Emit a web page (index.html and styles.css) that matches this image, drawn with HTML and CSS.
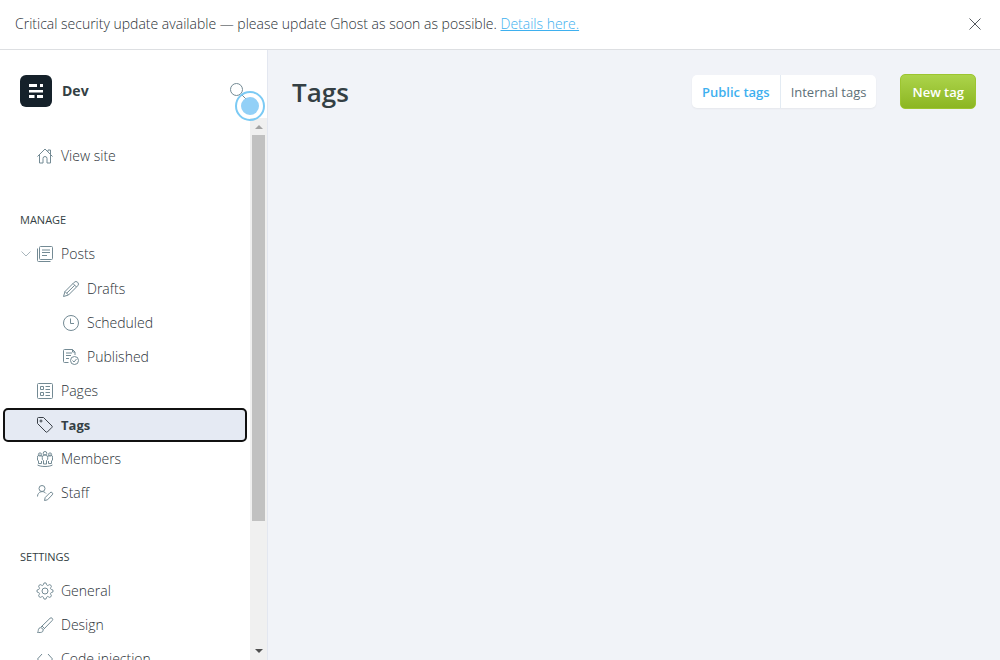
FILE: index.html
```html
<!DOCTYPE html>
<html lang="en">
<head>
<meta charset="utf-8">
<meta name="viewport" content="width=device-width, initial-scale=1">
<title>Tags - Dev</title>
<link rel="stylesheet" href="styles.css">
</head>
<body>
<div class="app">
  <aside class="alert">
    <p class="alert-text">Critical security update available — please update Ghost as soon as possible. <a href="#details">Details here.</a></p>
    <button class="alert-close" type="button" aria-label="Close">
      <svg viewBox="0 0 12 12" width="12" height="12"><path d="M.5.5l11 11M11.5.5l-11 11"/></svg>
    </button>
  </aside>
  <div class="shell">
    <nav class="sidebar" aria-label="Main">
      <header class="site">
        <svg class="site-logo" viewBox="0 0 32 32" width="32" height="32"><rect width="32" height="32" rx="6" fill="#15212a"/><path fill="#fff" d="M9 9h8v3H9zM20 9h3v3h-3zM9 15h14v2.500H9zM9 20h5.500v3H9zM17 20h6v3h-6z"/></svg>
        <span class="site-name">Dev</span>
        <button class="search" type="button" aria-label="Search">
          <svg class="icon" viewBox="0 0 16 16" width="16" height="16"><circle cx="6.500" cy="6.500" r="6"/><path d="M11 11l5 5"/></svg>
          <span class="pulse"></span>
        </button>
      </header>
      <div class="scroller">
        <div class="menu">
          <ul class="list">
            <li><a class="item" href="#site"><svg class="icon" viewBox="0 0 16 16" width="16" height="16"><path d="M.5 8.500L8 1l7.500 7.500M2.500 7v8h3.500v-4.500a2 2 0 0 1 4 0V15h3.500V7M11 3.500V2h2.500v4"/></svg>View site</a></li>
          </ul>
          <h2 class="heading">Manage</h2>
          <ul class="list">
            <li class="parent">
              <button class="toggle" type="button" aria-label="Collapse posts"><svg viewBox="0 0 10 6" width="10" height="6"><path d="M.5.5L5 5l4.500-4.500"/></svg></button>
              <a class="item" href="#posts"><svg class="icon" viewBox="0 0 16 16" width="16" height="16"><rect x="2.500" y=".5" width="13" height="13" rx="1"/><path d="M.5 2.500v12a1 1 0 0 0 1 1h12M5 4h8M5 6.500h8M5 9.500h5"/></svg>Posts</a>
              <ul class="sublist">
                <li><a class="item" href="#drafts"><svg class="icon" viewBox="0 0 16 16" width="16" height="16"><path d="M.5 15.500L2 10.500 11.200 1.300a2.400 2.400 0 0 1 3.500 3.500L5.500 14zM2 10.500L5.500 14M10 2.500L13.500 6M3.700 12.200L11.800 4.200"/></svg>Drafts</a></li>
                <li><a class="item" href="#scheduled"><svg class="icon" viewBox="0 0 16 16" width="16" height="16"><circle cx="8" cy="8" r="7.500"/><path d="M7.500 3.500v5H11"/></svg>Scheduled</a></li>
                <li><a class="item" href="#published"><svg class="icon" viewBox="0 0 16 16" width="16" height="16"><path d="M5.500 13.500h-4a1 1 0 0 1-1-1v-11a1 1 0 0 1 1-1h8l2.500 2.500v3M3 4h6M3 6.500h5M3 9.500h3M9.500.5V3H12"/><circle cx="11.500" cy="11.500" r="4"/><path d="M9.500 11.500l1.500 1.500 2.500-3"/></svg>Published</a></li>
              </ul>
            </li>
            <li><a class="item" href="#pages"><svg class="icon" viewBox="0 0 16 16" width="16" height="16"><rect x=".5" y=".5" width="15" height="15" rx="1"/><path d="M3.500 3.500h3v3h-3zM3.500 9.500h3v3h-3zM8.500 3.500H13M8.500 6.500H13M8.500 9.500H13M8.500 12.500H13"/></svg>Pages</a></li>
            <li><a class="item item-active" href="#tags" aria-current="page"><svg class="icon" viewBox="0 0 16 16" width="16" height="16"><path d="M.5 1.500a1 1 0 0 1 1-1h5L15 9a1 1 0 0 1 0 1.300L10.300 15a1 1 0 0 1-1.300 0L.5 6.500z"/><circle cx="4" cy="4" r="1"/></svg>Tags</a></li>
            <li><a class="item" href="#members"><svg class="icon" viewBox="0 0 16 16" width="16" height="16"><circle cx="8" cy="2.300" r="1.800"/><circle cx="3" cy="3.500" r="1.600"/><circle cx="13" cy="3.500" r="1.600"/><path d="M6.500 13V9.500L5.300 8.500V6.500a2.700 2.700 0 0 1 5.400 0v2L9.500 9.500V13zM5 5.800a2.300 2.300 0 0 0-4.500 1V9l1 1v2.500h3V10M11 5.800a2.300 2.300 0 0 1 4.500 1V9l-1 1v2.500h-3V10M.5 14c3.500 2 11.500 2 15 0"/></svg>Members</a></li>
            <li><a class="item" href="#staff"><svg class="icon" viewBox="0 0 16 16" width="16" height="16"><circle cx="5" cy="3.500" r="3"/><path d="M.5 11.500c0-5 6-6.500 8.500-3M7.500 15.500l.7-3 4.800-4.800a1.500 1.500 0 0 1 2.200 2.200L10.500 14.800z"/></svg>Staff</a></li>
          </ul>
          <h2 class="heading">Settings</h2>
          <ul class="list">
            <li><a class="item" href="#general"><svg class="icon" viewBox="0 0 16 16" width="16" height="16"><path d="M6.500 1.300a1.500 1.500 0 0 1 3 0c.2 1.200 1 1.500 2 .9a1.500 1.500 0 0 1 2.300 2.300c-.6 1-.3 1.800.8 2a1.500 1.500 0 0 1 0 3c-1.100.2-1.400 1-.8 2a1.500 1.500 0 0 1-2.300 2.300c-1-.6-1.800-.3-2 .9a1.500 1.500 0 0 1-3 0c-.2-1.200-1-1.500-2-.9a1.500 1.500 0 0 1-2.300-2.300c.6-1 .3-1.800-.8-2a1.500 1.500 0 0 1 0-3c1.100-.2 1.400-1 .8-2a1.500 1.500 0 0 1 2.300-2.300c1 .6 1.800.3 2-.9z"/><circle cx="8" cy="8" r="3"/></svg>General</a></li>
            <li><a class="item" href="#design"><svg class="icon" viewBox="0 0 16 16" width="16" height="16"><path d="M.5 15.500c1-1 .5-3 1.500-4.200a2.500 2.500 0 0 1 3.700 3.300C4.500 15.800 2 15.500.5 15.500zM4 10l9-8.700a1.500 1.500 0 0 1 2.200 2.200L6.500 12.500M5 9l2.500 2.500"/></svg>Design</a></li>
            <li><a class="item" href="#code"><svg class="icon" viewBox="0 0 16 16" width="16" height="16"><path d="M5 3L.5 8 5 13M11 3l4.500 5-4.500 5"/></svg>Code injection</a></li>
          </ul>
        </div>
        <div class="scrollbar" aria-hidden="true">
          <svg class="arrow arrow-up" viewBox="0 0 8 4" width="8" height="4"><path d="M0 4l4-4 4 4z"/></svg>
          <div class="track"><div class="thumb"></div></div>
          <svg class="arrow" viewBox="0 0 8 4" width="8" height="4"><path d="M0 0l4 4 4-4z"/></svg>
        </div>
      </div>
    </nav>
    <main class="main">
      <header class="page-header">
        <h1 class="title">Tags</h1>
        <div class="actions">
          <div class="segments">
            <button class="segment segment-on" type="button">Public tags</button>
            <button class="segment" type="button">Internal tags</button>
          </div>
          <a class="primary" href="#new">New tag</a>
        </div>
      </header>
    </main>
  </div>
</div>
</body>
</html>
```
FILE: styles.css
```css
* {
  box-sizing: border-box;
}

body {
  margin: 0;
  color: #2b3137;
  background: #fff;
  font: 300 14px/20px "Open Sans", "Noto Sans", sans-serif;
}

button {
  border: 0;
  padding: 0;
  background: none;
  font: inherit;
  color: inherit;
  cursor: pointer;
}

ul {
  margin: 0;
  padding: 0;
  list-style: none;
}

svg {
  display: block;
  flex: none;
  overflow: visible;
}

.app {
  display: flex;
  flex-direction: column;
  height: 100vh;
  overflow: hidden;
}

.alert {
  display: flex;
  align-items: center;
  justify-content: space-between;
  padding: 14px 19px 15px 15px;
  border-bottom: 1px solid #dddfe2;
}

.alert-text {
  margin: 0;
}

.alert-text a {
  color: #3eb0ef;
}

.alert-close svg {
  stroke: #54595e;
  fill: none;
}

.shell {
  display: flex;
  flex: 1;
  min-height: 0;
}

.sidebar {
  display: flex;
  flex-direction: column;
  flex: none;
  width: 268px;
  border-right: 1px solid #e3e7f0;
}

.site {
  display: flex;
  align-items: center;
  gap: 10px;
  padding: 25px 20px 11px;
}

.site-name {
  flex: 1;
  color: #343f44;
  font-weight: 700;
}

.search {
  position: relative;
  padding: 1px;
}

.pulse {
  position: absolute;
  left: 6px;
  top: 9px;
  width: 30px;
  height: 30px;
  border: 2px solid #7bcaf4;
  border-radius: 50%;
}

.pulse::before {
  content: "";
  position: absolute;
  inset: 4px;
  border-radius: 50%;
  background: #92d0f7;
}

.icon {
  fill: none;
  stroke: #738a94;
  stroke-width: 1;
}

.scroller {
  display: flex;
  flex: 1;
  min-height: 0;
}

.menu {
  flex: 1;
  overflow: hidden;
  padding: 21px 3px 0;
}

.item {
  display: flex;
  align-items: center;
  gap: 8px;
  height: 34px;
  padding-left: 34px;
  color: #2b3137;
  text-decoration: none;
}

.item-active {
  border: 2px solid #111;
  border-radius: 5px;
  padding-left: 32px;
  background: #e5eaf3;
  font-size: 13px;
  font-weight: 700;
  color: #343f44;
}

.item-active .icon {
  stroke: #394047;
}

.heading {
  margin: 37px 17px 7px;
  font-size: 11px;
  line-height: 20px;
  font-weight: 400;
  text-transform: uppercase;
  color: #343f44;
}

.parent {
  position: relative;
}

.toggle {
  position: absolute;
  left: 18px;
  top: 14px;
}

.toggle svg {
  fill: none;
  stroke: #a9b6bd;
}

.sublist {
  padding: 1px 0 0 26px;
}

.scrollbar {
  display: flex;
  flex-direction: column;
  align-items: center;
  width: 17px;
  gap: 6px;
  padding: 7px 0;
  background: #f0f0f0;
}

.arrow {
  fill: #505050;
}

.arrow-up {
  fill: #a3a3a3;
}

.track {
  flex: 1;
  width: 13px;
}

.thumb {
  height: 76%;
  background: #c1c1c1;
}

.main {
  flex: 1;
  background: #f1f3f8;
}

.page-header {
  display: flex;
  align-items: center;
  justify-content: space-between;
  padding: 24px;
}

.title {
  margin: 0;
  color: #343f44;
  font-size: 26px;
  line-height: 34px;
  font-weight: 600;
}

.actions {
  display: flex;
  align-items: center;
  gap: 24px;
  font-size: 13px;
  font-weight: 400;
}

.segments {
  display: flex;
  border-radius: 5px;
  background: #fff;
  box-shadow: 0 1px 2px rgb(0 0 0 / 5%);
}

.segment {
  height: 33px;
  padding: 0 10px;
  color: #5d6f77;
}

.segment-on {
  border-right: 1px solid #e3ebf3;
  color: #3eb0ef;
  font-weight: 600;
}

.primary {
  padding: 8px 11px 7px;
  border: 1px solid #9cc530;
  border-radius: 5px;
  background: linear-gradient(#acd44b, #8cb622);
  color: #fff;
  line-height: 18px;
  font-weight: 600;
  text-decoration: none;
}
```
